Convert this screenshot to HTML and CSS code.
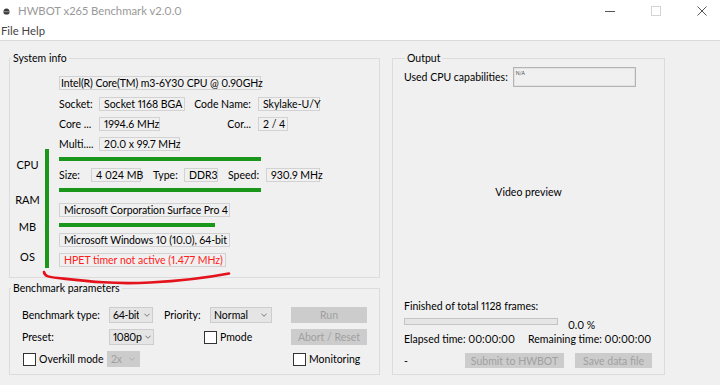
FILE: index.html
```html
<!DOCTYPE html>
<html lang="en">
<head>
    <meta charset="UTF-8">
    <title>HWBOT x265 Benchmark v2.0.0</title>
    <link rel="stylesheet" href="styles.css">
</head>
<body>

    <!-- TITLE BAR -->
    <div class="titlebar">
        <svg class="app-icon" viewBox="0 0 8 8">
            <path d="M0.5 4.5 Q0.5 0.5 4 0.5 Q7.5 0.5 7.5 4.5 Q7.5 7.5 4 7.5 Q0.5 7.5 0.5 4.5 Z" fill="#3b3b3b"/>
            <path d="M1 4.2 H7" stroke="#bbb" stroke-width="0.8"/>
        </svg>
        <span class="title">HWBOT x265 Benchmark v2.0.0</span>
        <div class="controls">
            <svg viewBox="0 0 10 10"><path d="M0 5.5 H10" stroke="#555" stroke-width="1"/></svg>
            <svg viewBox="0 0 10 10"><rect x="0.5" y="0.5" width="9" height="9" fill="none" stroke="#d4d4d4" stroke-width="1"/></svg>
            <svg viewBox="0 0 10 10"><path d="M0.5 0.5 L9.5 9.5 M9.5 0.5 L0.5 9.5" stroke="#555" stroke-width="1"/></svg>
        </div>
    </div>
    <div class="menubar">File Help</div>

    <div class="client">
        <div class="left">

            <!-- SYSTEM INFO -->
            <fieldset class="group sysinfo">
                <legend>System info</legend>
                <div class="sys-body">
                    <div class="tags">
                        <span class="tag tag-cpu">CPU</span>
                        <span class="tag tag-ram">RAM</span>
                        <span class="tag tag-mb">MB</span>
                        <span class="tag tag-os">OS</span>
                    </div>
                    <div class="vbar"></div>
                    <div class="rows">
                        <div class="box w-cpu">Intel(R) Core(TM) m3-6Y30 CPU @ 0.90GHz</div>
                        <div class="cpu-grid">
                            <span>Socket:</span>
                            <span class="box w-socket">Socket 1168 BGA</span>
                            <span class="lbl-r">Code Name:</span>
                            <span class="box w-code">Skylake-U/Y</span>
                            <span>Core ...</span>
                            <span class="box w-clock">1994.6 MHz</span>
                            <span class="lbl-r">Cor...</span>
                            <span class="box w-cores">2 / 4</span>
                            <span>Multi....</span>
                            <span class="box w-multi">20.0 x 99.7 MHz</span>
                        </div>
                        <div class="mark"></div>
                        <div class="ram-row">
                            <span>Size:</span>
                            <span class="box">4 024 MB</span>
                            <span class="k2">Type:</span>
                            <span class="box">DDR3</span>
                            <span class="k3">Speed:</span>
                            <span class="box">930.9 MHz</span>
                        </div>
                        <div class="mark"></div>
                        <div class="box w-board">Microsoft Corporation Surface Pro 4</div>
                        <div class="mark short"></div>
                        <div class="box w-os">Microsoft Windows 10 (10.0), 64-bit</div>
                        <div class="box w-hpet warn">HPET timer not active (1.477 MHz)</div>
                    </div>
                </div>
                <svg class="scribble" viewBox="0 0 200 22">
                    <path d="M4 5 C4.5 9 8 10 18 11 C45 14 72 17.5 110 15.5 C140 14 168 10.5 189 6.5" fill="none" stroke="#e3121b" stroke-width="2.6" stroke-linecap="round"/>
                </svg>
            </fieldset>

            <!-- BENCHMARK PARAMETERS -->
            <fieldset class="group params">
                <legend>Benchmark parameters</legend>
                <div class="params-grid">
                    <span>Benchmark type:</span>
                    <div class="combo w-bits"><span>64-bit</span><svg viewBox="0 0 7 4"><polyline points="0.5,0.5 3.5,3.5 6.5,0.5"/></svg></div>
                    <span>Priority:</span>
                    <div class="combo w-prio"><span>Normal</span><svg viewBox="0 0 7 4"><polyline points="0.5,0.5 3.5,3.5 6.5,0.5"/></svg></div>
                    <button class="btn">Run</button>

                    <span>Preset:</span>
                    <div class="combo w-preset"><span>1080p</span><svg viewBox="0 0 7 4"><polyline points="0.5,0.5 3.5,3.5 6.5,0.5"/></svg></div>
                    <label class="check pmode"><span class="tick"></span>Pmode</label>
                    <button class="btn">Abort / Reset</button>

                    <label class="check overkill"><span class="tick"></span>Overkill mode</label>
                    <div class="combo disabled w-kill"><span>2x</span><svg viewBox="0 0 7 4"><polyline points="0.5,0.5 3.5,3.5 6.5,0.5"/></svg></div>
                    <label class="check monitoring"><span class="tick"></span>Monitoring</label>
                </div>
            </fieldset>
        </div>

        <!-- OUTPUT -->
        <fieldset class="group output">
            <legend>Output</legend>
            <div class="caps-row">
                <span>Used CPU capabilities:</span>
                <div class="caps-box">N/A</div>
            </div>
            <div class="preview">Video preview</div>
            <div class="progress-block">
                <div class="line">Finished of total 1128 frames:</div>
                <div class="progress-row">
                    <div class="progress"></div>
                    <span>0.0 %</span>
                </div>
                <div class="line times">
                    <span class="elapsed">Elapsed time: 00:00:00</span>
                    <span>Remaining time: 00:00:00</span>
                </div>
                <div class="actions">
                    <span class="dash">-</span>
                    <button class="btn w-submit">Submit to HWBOT</button>
                    <button class="btn w-save">Save data file</button>
                </div>
            </div>
        </fieldset>
    </div>

</body>
</html>
```

FILE: styles.css
```css
* { margin: 0; padding: 0; box-sizing: border-box; }
body {
    width: 720px;
    height: 385px;
    overflow: hidden;
    background: #f0f0f0;
    font-family: Lato, "Noto Sans", sans-serif;
    font-size: 10.5px;
    font-variant-numeric: proportional-nums;
    line-height: 14px;
    color: #000;
}

/* window chrome */
.titlebar {
    height: 22px;
    background: #fff;
    display: flex;
    align-items: center;
    padding-left: 3px;
    font-size: 11.3px;
}
.app-icon { width: 7px; height: 7px; }
.title { margin-left: 8px; color: #999; }
.controls { margin-left: auto; display: flex; gap: 36px; padding-right: 13px; }
.controls svg { width: 10px; height: 10px; display: block; }
.menubar {
    height: 19px;
    background: #fff;
    border-bottom: 1px solid #dadada;
    padding-left: 1px;
    line-height: 18px;
    font-size: 11.3px;
    color: #444;
}

.client { display: flex; gap: 12px; padding: 10px 0 0 9px; }
.left { width: 371px; display: flex; flex-direction: column; }

/* group boxes */
.group {
    border: 1px solid #dcdcdc;
    min-width: 0;
    position: relative;
}
.group legend { margin-left: 1px; padding: 0 2px; line-height: 14px; }

/* system info */
.sys-body {
    display: grid;
    grid-template-columns: 35px 4px 1fr;
    padding: 11px 0 9px;
}
.tags { display: flex; flex-direction: column; align-items: center; }
.tag { line-height: 16px; font-size: 11px; }
.tag-cpu { margin-top: 81px; }
.tag-ram { margin-top: 19px; }
.tag-mb { margin-top: 11px; }
.tag-os { margin-top: 14px; }
.vbar { margin-top: 73px; height: 119px; background: #1a961a; }
.rows { display: flex; flex-direction: column; align-items: flex-start; margin-left: 10px; }

.box {
    height: 14px;
    border: 1px solid #d2d2d2;
    line-height: 12px;
    padding: 0 4px;
    white-space: nowrap;
}
.w-cpu { width: 202px; padding-left: 1px; letter-spacing: -0.1px; }
.w-socket { width: 86px; }
.w-code { width: 62px; }
.w-clock { width: 61px; }
.w-cores { width: 30px; }
.w-multi { width: 81px; }
.w-board { width: 171px; margin-top: 11px; letter-spacing: -0.1px; }
.w-os { width: 171px; margin-top: 6px; letter-spacing: -0.1px; }
.w-hpet { width: 167px; margin-top: 6px; }
.warn { color: #ff1c1c; }

.cpu-grid {
    display: grid;
    grid-template-columns: 40px 97px 62px auto;
    grid-auto-rows: 14px;
    row-gap: 6px;
    margin-top: 7px;
    align-items: center;
    justify-items: start;
    white-space: nowrap;
}
.lbl-r { justify-self: end; padding-right: 7px; }

.mark { width: 202px; height: 4px; background: #1a961a; margin-top: 6px; }
.mark.short { width: 156px; }

.ram-row {
    display: grid;
    grid-template-columns: 32px 50px 43px 34px 48px 54px;
    grid-auto-rows: 14px;
    align-items: center;
    margin-top: 7px;
}
.ram-row .k2 { padding-left: 12px; }
.ram-row .k3 { padding-left: 10px; }

.scribble {
    position: absolute;
    left: 30px;
    top: 202px;
    width: 200px;
    height: 22px;
    overflow: visible;
}

/* benchmark parameters */
.params { margin-top: 3px; }
.params-grid {
    display: grid;
    grid-template-columns: 87px 55px 46px 81px 76px;
    grid-auto-rows: 16px;
    row-gap: 6px;
    align-items: center;
    padding: 12px 0 7px 12px;
    white-space: nowrap;
}
.combo {
    height: 16px;
    border: 1px solid #cdcdcd;
    background: #e5e5e5;
    display: flex;
    align-items: center;
    justify-content: space-between;
    padding: 0 2px 0 3px;
    letter-spacing: -0.3px;
}
.combo span { overflow: hidden; }
.combo svg { width: 6px; height: 4px; flex-shrink: 0; }
.combo polyline { fill: none; stroke: #666; stroke-width: 1; }
.combo.disabled { background: #cccccc; border-color: #cccccc; color: #a0a0a0; }
.combo.disabled polyline { stroke: #a8a8a8; }
.w-bits { width: 44px; }
.w-prio { width: 62px; padding-right: 4px; letter-spacing: 0; }
.w-preset { width: 45px; }
.w-kill { width: 33px; margin-left: -2px; padding-right: 4px; }

.check { display: flex; align-items: center; gap: 3px; }
.tick { width: 13px; height: 13px; border: 1px solid #333; background: #fff; }
.pmode { grid-column: 3 / span 2; margin-left: 40px; }
.overkill { margin-left: 1px; }
.monitoring { grid-column: 5; margin-left: 2px; }

.btn {
    height: 16px;
    border: none;
    background: #cccccc;
    color: #a0a0a0;
    font: inherit;
    line-height: 16px;
    white-space: nowrap;
}

/* output */
.output {
    width: 273px;
    display: flex;
    flex-direction: column;
    padding: 2px 0 6px 11px;
}
.caps-row { display: flex; align-items: center; gap: 5px; }
.caps-box {
    width: 123px;
    height: 20px;
    border: 1px solid #b4b4b4;
    box-shadow: inset 0 0 0 1px #e2e2e2;
    font-size: 5px;
    line-height: 8px;
    padding: 1px 2px;
    color: #444;
}
.preview {
    flex: 1;
    display: flex;
    align-items: center;
    justify-content: center;
    padding: 0 11px 2px 0;
}
.progress-row { display: flex; align-items: flex-start; margin-top: 5px; }
.progress { width: 154px; height: 7px; border: 1px solid #c4c4c4; background: #e6e6e6; margin-right: 10px; }
.times { display: flex; white-space: nowrap; }
.elapsed { width: 124px; }
.actions { display: flex; align-items: center; margin-top: 7px; height: 15px; }
.dash { width: 61px; }
.w-submit { width: 99px; height: 15px; }
.w-save { width: 77px; height: 15px; margin-left: 11px; }
```
